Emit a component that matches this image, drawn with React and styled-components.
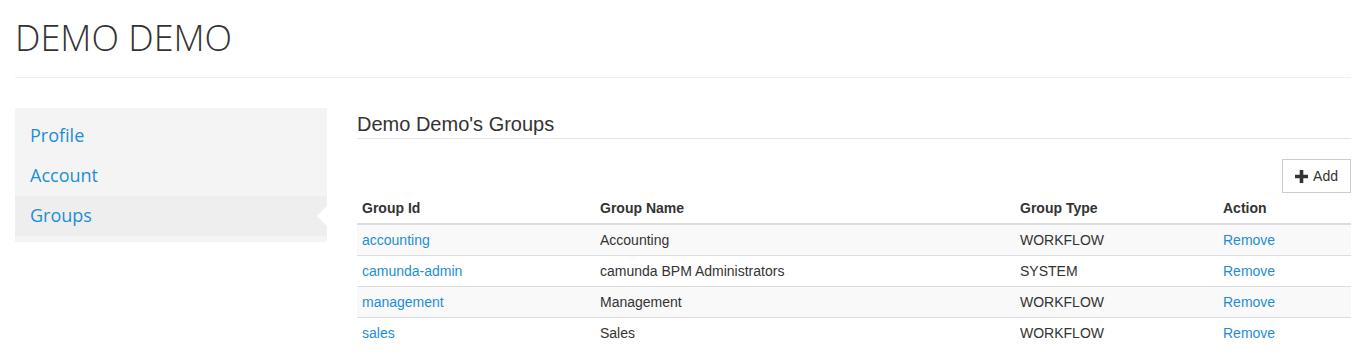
import React from "react";
import styled, { createGlobalStyle } from "styled-components";

const GlobalStyle = createGlobalStyle`
  html, body { margin: 0; padding: 0; background: #fff; }
  body { font-family: "Liberation Sans", Arial, sans-serif; font-size: 14px; color: #333; }
  * { box-sizing: border-box; }
`;

const LINK = "#1d8ed6";

const Page = styled.div`
  padding: 0 11px 0 15px;
`;

const Header = styled.header`
  border-bottom: 1px solid #eee;
  height: 78px;
  display: flex;
  align-items: flex-start;
`;

const UserName = styled.h1`
  margin: 18px 0 0 0;
  font-family: "Open Sans", sans-serif;
  font-weight: 300;
  font-size: 36px;
  line-height: 40px;
  color: #333;
`;

const Body = styled.div`
  display: flex;
  gap: 30px;
  margin-top: 30px;
  align-items: flex-start;
`;

const Sidebar = styled.nav`
  width: 312px;
  flex: none;
  background: #f4f4f4;
  padding: 8px 0 6px;
  display: flex;
  flex-direction: column;
`;

const NavItem = styled.a`
  position: relative;
  display: block;
  height: 40px;
  line-height: 38px;
  padding: 0 0 2px 15px;
  font-family: "Open Sans", sans-serif;
  font-size: 18px;
  color: ${LINK};
  text-decoration: none;
  background: ${(p) => (p.$active ? "#eeeeee" : "transparent")};
  &::after {
    content: "";
    display: ${(p) => (p.$active ? "block" : "none")};
    position: absolute;
    right: 0;
    top: 10px;
    border-style: solid;
    border-width: 10px 10px 10px 0;
    border-color: transparent #fff transparent transparent;
  }
`;

const Main = styled.main`
  flex: 1;
  min-width: 0;
`;

const SectionTitle = styled.h3`
  margin: 5px 0 0;
  padding-bottom: 3px;
  border-bottom: 1px solid #e5e5e5;
  font-family: "Liberation Sans", Arial, sans-serif;
  font-weight: 400;
  font-size: 20px;
  line-height: 22px;
  color: #333;
`;

const Toolbar = styled.div`
  display: flex;
  justify-content: flex-end;
  margin-top: 20px;
`;

const Button = styled.button`
  display: inline-flex;
  align-items: center;
  gap: 5px;
  height: 34px;
  padding: 0 12px 0 12px;
  border: 1px solid #ccc;
  background: #fff;
  color: #333;
  font-family: "Liberation Sans", Arial, sans-serif;
  font-size: 14px;
  cursor: pointer;
`;

const Table = styled.table`
  width: 100%;
  border-collapse: collapse;
  font-size: 14px;
`;

const Th = styled.th`
  text-align: left;
  font-weight: 700;
  padding: 5px;
  line-height: 20px;
  border-bottom: 2px solid #ddd;
  width: ${(p) => p.$w};
`;

const Tr = styled.tr`
  background: ${(p) => (p.$striped ? "#f9f9f9" : "#fff")};
`;

const Td = styled.td`
  padding: 5px;
  line-height: 20px;
  border-top: 1px solid #ddd;
  color: #333;
`;

const Link = styled.a`
  color: ${LINK};
  text-decoration: none;
`;

const PlusIcon = () => (
  <svg width="13" height="13" viewBox="0 0 13 13" aria-hidden="true">
    <path d="M4.7 0h3.6v4.7H13v3.6H8.3V13H4.7V8.3H0V4.7h4.7z" fill="#333" />
  </svg>
);

const groups = [
  { id: "accounting", name: "Accounting", type: "WORKFLOW" },
  { id: "camunda-admin", name: "camunda BPM Administrators", type: "SYSTEM" },
  { id: "management", name: "Management", type: "WORKFLOW" },
  { id: "sales", name: "Sales", type: "WORKFLOW" },
];

export default function App() {
  return (
    <>
      <GlobalStyle />
      <Page>
        <Header>
          <UserName>DEMO DEMO</UserName>
        </Header>
        <Body>
          <Sidebar>
            <NavItem href="#">Profile</NavItem>
            <NavItem href="#">Account</NavItem>
            <NavItem href="#" $active>Groups</NavItem>
          </Sidebar>
          <Main>
            <SectionTitle>Demo Demo's Groups</SectionTitle>
            <Toolbar>
              <Button>
                <PlusIcon />
                Add
              </Button>
            </Toolbar>
            <Table>
              <thead>
                <tr>
                  <Th $w="238px">Group Id</Th>
                  <Th $w="420px">Group Name</Th>
                  <Th $w="203px">Group Type</Th>
                  <Th>Action</Th>
                </tr>
              </thead>
              <tbody>
                {groups.map((g, i) => (
                  <Tr key={g.id} $striped={i % 2 === 0}>
                    <Td><Link href="#">{g.id}</Link></Td>
                    <Td>{g.name}</Td>
                    <Td>{g.type}</Td>
                    <Td><Link href="#">Remove</Link></Td>
                  </Tr>
                ))}
              </tbody>
            </Table>
          </Main>
        </Body>
      </Page>
    </>
  );
}
